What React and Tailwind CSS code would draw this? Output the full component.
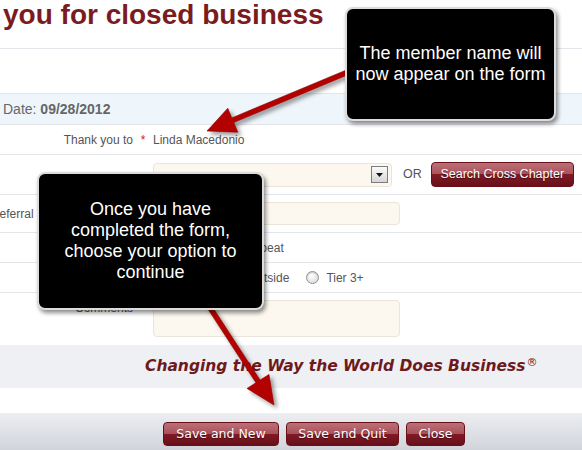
import React from "react";

const Radio = () => (
    <span className="inline-block w-[13px] h-[13px] rounded-full border border-[#8e8e8e] bg-[radial-gradient(circle_at_40%_35%,#ffffff,#d4d4d4)] shadow-[inset_0_1px_1px_rgba(0,0,0,0.15)]" />
);

const Label = ({ children }) => (
    <div className="w-[133px] shrink-0 flex justify-end whitespace-nowrap text-[12px] text-[#555]">
        {children}
    </div>
);

const RedButton = ({ children, w, className = "" }) => (
    <button
        className={`h-[24px] ${w} rounded-[4px] border border-[#6a0f18] bg-[linear-gradient(#bc7078_0%,#a9505a_50%,#811a25_50%,#68101a_100%)] text-white [text-shadow:0_1px_1px_rgba(0,0,0,0.45)] ${className}`}
    >
        {children}
    </button>
);

const App = () => {
    return (
        <div className="relative w-[582px] h-[450px] overflow-hidden bg-white font-['Liberation_Sans',Arial,sans-serif]">
            {/* title */}
            <div className="h-[49px] border-b border-[#e4e5ea] pl-[3px] pt-[1px]">
                <h1 className="text-[28px] leading-[28px] font-bold text-[#7a1c1f] whitespace-nowrap">
                    you for closed business
                </h1>
            </div>

            <div className="h-[45px] border-b border-[#e4e5ea]" />

            {/* date */}
            <div className="h-[31px] border-b border-[#e4e5ea] bg-[#eef6fc] flex items-center pl-[3px] text-[14px] text-[#666]">
                Date:&nbsp;<span className="font-bold">09/28/2012</span>
            </div>

            {/* thank you to */}
            <div className="h-[30px] border-b border-[#e4e5ea] flex items-center">
                <Label>Thank you to</Label>
                <div className="w-[20px] text-center text-[12px] text-[#d11]">*</div>
                <div className="text-[12px] text-[#555]">Linda Macedonio</div>
            </div>

            {/* member select */}
            <div className="h-[40px] border-b border-[#e4e5ea] flex items-center">
                <Label />
                <div className="w-[20px]" />
                <div className="w-[239px] h-[24px] rounded-[4px] border border-[#ebe4d8] bg-[#fdf8ef] flex items-center justify-end pr-[3px]">
                    <div className="w-[17px] h-[17px] border border-[#7d7d7d] bg-[linear-gradient(#fafafa,#d6d6d6)] flex items-center justify-center">
                        <svg width="7" height="4" viewBox="0 0 7 4">
                            <path d="M0 0h7L3.5 4z" fill="#111" />
                        </svg>
                    </div>
                </div>
                <span className="ml-[11px] text-[12.5px] text-[#555]">OR</span>
                <RedButton w="w-[143px]" className="ml-[9px] h-[25px] text-[12.5px]">
                    Search Cross Chapter
                </RedButton>
            </div>

            {/* referral */}
            <div className="h-[38px] border-b border-[#e4e5ea] flex items-center">
                <Label>Referral Business Amount:</Label>
                <div className="w-[20px]" />
                <div className="w-[247px] h-[23px] rounded-[4px] border border-[#ebe4d8] bg-[#fdf8ef]" />
            </div>

            {/* repeat */}
            <div className="h-[30px] border-b border-[#e4e5ea] flex items-center">
                <Label />
                <div className="w-[20px]" />
                <div className="flex items-center text-[12px] text-[#555]">
                    <Radio />
                    <span className="ml-[6px]">New</span>
                    <span className="ml-[30px] flex items-center">
                        <Radio />
                        <span className="ml-[6px]">Repeat</span>
                    </span>
                </div>
            </div>

            {/* tier */}
            <div className="h-[30px] border-b border-[#e4e5ea] flex items-center">
                <Label />
                <div className="w-[20px]" />
                <div className="flex items-center text-[12px] text-[#555]">
                    <Radio />
                    <span className="ml-[7px]">Inside</span>
                    <span className="ml-[23px] flex items-center">
                        <Radio />
                        <span className="ml-[7px]">Outside</span>
                    </span>
                    <span className="ml-[17px] flex items-center">
                        <Radio />
                        <span className="ml-[7px]">Tier 3+</span>
                    </span>
                </div>
            </div>

            {/* comments */}
            <div className="h-[52px] flex items-start">
                <div className="mt-[8px] leading-[14px]">
                    <Label>Comments</Label>
                </div>
                <div className="w-[20px]" />
                <div className="mt-[7px] w-[247px] h-[37px] rounded-[4px] border border-[#ebe4d8] bg-[#fdf8ef]" />
            </div>

            {/* slogan band */}
            <div className="h-[43px] bg-[#eef0f3] flex items-center pl-[145px]">
                <p className="font-['DejaVu_Sans',Verdana,sans-serif] font-bold italic text-[15.5px] text-[#6e1a1d] whitespace-nowrap">
                    Changing the Way the World Does Business
                    <span className="inline-block text-[11px] leading-none not-italic font-normal align-[5px] ml-[1px]">®</span>
                </p>
            </div>

            <div className="h-[25px]" />

            {/* footer */}
            <div className="h-[37px] bg-[linear-gradient(#eceef2,#d1d4da)] flex items-start pt-[9px] pl-[163px] gap-[7px] font-['DejaVu_Sans',Verdana,sans-serif] text-[12.5px]">
                <RedButton w="w-[116px]">Save and New</RedButton>
                <RedButton w="w-[113px]">Save and Quit</RedButton>
                <RedButton w="w-[59px]">Close</RedButton>
            </div>

            {/* annotation arrows */}
            <svg className="absolute left-0 top-0 pointer-events-none" width="582" height="450">
                <defs>
                    <filter id="shadow" x="-20%" y="-20%" width="140%" height="140%">
                        <feDropShadow dx="3" dy="3" stdDeviation="2" floodColor="#000" floodOpacity="0.4" />
                    </filter>
                </defs>
                <polygon
                    points="361,69.3 233.8,122.5 237.8,132.2 207,131 227.8,108.2 231.8,117.9 359,64.7"
                    fill="#b30000"
                    stroke="#8a0000"
                    strokeWidth="0.6"
                    filter="url(#shadow)"
                />
                <polygon
                    points="202.9,301.3 255.9,382.7 247,388.4 274,405 269,374.4 260.1,380.1 207.1,298.7"
                    fill="#b30000"
                    stroke="#8a0000"
                    strokeWidth="0.6"
                    filter="url(#shadow)"
                />
            </svg>

            {/* callouts */}
            <div className="absolute left-[345px] top-[7px] w-[211px] h-[114px] rounded-[8px] border-2 border-[#dcdcdc] bg-black shadow-[2px_3px_4px_rgba(0,0,0,0.45)] flex items-center justify-center text-center text-white text-[18px] leading-[21px]">
                <p>
                    The member name will
                    <br />
                    now appear on the form
                </p>
            </div>

            <div className="absolute left-[37px] top-[172px] w-[227px] h-[138px] rounded-[8px] border-2 border-[#dcdcdc] bg-black shadow-[2px_3px_4px_rgba(0,0,0,0.45)] flex items-center justify-center text-center text-white text-[18px] leading-[21px]">
                <p>
                    Once you have
                    <br />
                    completed the form,
                    <br />
                    choose your option to
                    <br />
                    continue
                </p>
            </div>
        </div>
    );
};

export default App;
